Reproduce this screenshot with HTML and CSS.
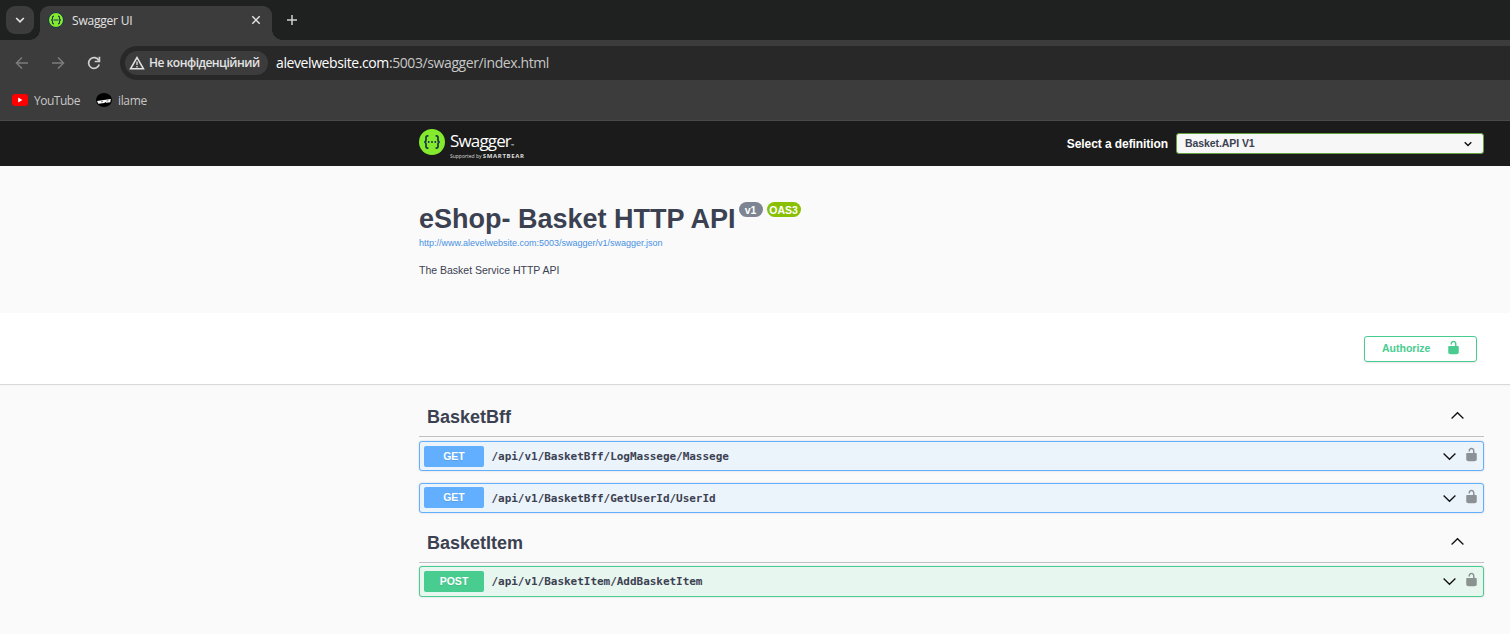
FILE: index.html
```html
<!DOCTYPE html>
<html lang="uk">
<head>
<meta charset="utf-8">
<title>Swagger UI</title>
<link rel="stylesheet" href="styles.css">
</head>
<body>
<svg width="0" height="0" class="defs" aria-hidden="true">
  <symbol id="lock" viewBox="0 0 20 20"><path d="M15.8 8H14V5.6C14 2.703 12.665 1 10 1 7.334 1 6 2.703 6 5.6V6h2v-.801C8 3.754 8.797 3 10 3c1.203 0 2 .754 2 2.199V8H4c-.553 0-1 .646-1 1.199V17c0 .549.428 1.139.951 1.307l1.197.387C5.672 18.861 6.55 19 7.1 19h5.8c.549 0 1.428-.139 1.951-.307l1.196-.387c.524-.167.953-.757.953-1.306V9.199C17 8.646 16.352 8 15.8 8z"/></symbol>
  <symbol id="down" viewBox="0 0 16 16"><path d="M1.7 4.8 8 11l6.3-6.2" fill="none" stroke="#111" stroke-width="1.4"/></symbol>
  <symbol id="up" viewBox="0 0 16 16"><path d="M1.7 11.2 8 5l6.3 6.2" fill="none" stroke="#111" stroke-width="1.4"/></symbol>
  <symbol id="braces" viewBox="0 0 26 26"><circle cx="13" cy="13" r="13" fill="#85ea2d"/><path d="M9.4 6.8H8.6Q7 6.8 7 8.700v2Q7 12.800 5.300 13 7 13.200 7 15.300v2q0 1.900 1.600 1.900h.8M16.600 6.800h.8q1.600 0 1.600 1.900v2q0 2.100 1.700 2.300-1.700.2-1.700 2.300v2q0 1.900-1.600 1.900h-.8" fill="none" stroke="#173647" stroke-width="1.7"/><circle cx="9.7" cy="13" r="1" fill="#173647"/><circle cx="13" cy="13" r="1" fill="#173647"/><circle cx="16.3" cy="13" r="1" fill="#173647"/></symbol>
</svg>

<div class="browser">
  <div class="tabs">
    <div class="tab-search"><svg width="10" height="10" viewBox="0 0 10 10"><path d="M1.2 3 5 6.8 8.8 3" fill="none" stroke="#e3e3e3" stroke-width="1.7"/></svg></div>
    <div class="tab">
      <svg class="favicon" width="16" height="16" viewBox="0 0 16 16"><circle cx="8" cy="8" r="7.5" fill="#85ea2d" stroke="#173647"/><path d="M6 4.1q-1.7 0-1.5 1.7Q4.7 8 3 8q1.7 0 1.5 2.2-.2 1.7 1.5 1.7M10 4.1q1.7 0 1.5 1.7Q11.3 8 13 8q-1.7 0-1.5 2.2.2 1.7-1.5 1.7M5.5 8h5" fill="none" stroke="#173647" stroke-width="1.1"/></svg>
      <span class="tab-title">Swagger UI</span>
      <svg class="close" width="10" height="10" viewBox="0 0 10 10"><path d="m1.3 1.3 7.4 7.4m0-7.4L1.3 8.7" stroke="#e3e3e3" stroke-width="1.5"/></svg>
    </div>
    <svg class="new-tab" width="12" height="12" viewBox="0 0 12 12"><path d="M6 1v10M1 6h10" stroke="#d0d0d0" stroke-width="1.5"/></svg>
  </div>
  <div class="toolbar">
    <svg width="14" height="14" viewBox="0 0 14 14"><path d="M13 7H1.5M7 1.5 1.5 7 7 12.5" fill="none" stroke="#7c7c7c" stroke-width="1.5"/></svg>
    <svg width="14" height="14" viewBox="0 0 14 14"><path d="M1 7h11.5M7 1.5 12.5 7 7 12.5" fill="none" stroke="#7c7c7c" stroke-width="1.5"/></svg>
    <svg width="14" height="14" viewBox="0 0 14 14"><path d="M11.8 4.5A5.4 5.4 0 1 0 12.2 8.5" fill="none" stroke="#d0d0d0" stroke-width="1.7"/><path d="M12.4.8v4.7H7.7" fill="none" stroke="#d0d0d0" stroke-width="1.7"/></svg>
    <div class="address">
      <div class="security"><svg width="16" height="14" viewBox="0 0 16 14"><path d="M8 1.6 14.5 12.8h-13z" fill="none" stroke="#e3e3e3" stroke-width="1.5"/><path d="M8 5.5v3.4M8 10v1.5" stroke="#e3e3e3" stroke-width="1.3"/></svg><span class="security-text">Не конфіденційний</span></div>
      <span class="url"><span class="host">alevelwebsite.com</span>:5003/swagger/index.html</span>
    </div>
  </div>
  <div class="bookmarks">
    <svg width="16" height="12" viewBox="0 0 16 12"><rect width="16" height="12" rx="3" fill="#f00"/><path d="m6.2 3.5 4.2 2.5-4.2 2.5z" fill="#fff"/></svg>
    <span class="youtube">YouTube</span>
    <svg width="16" height="14" viewBox="0 0 16 14"><ellipse cx="8" cy="7" rx="8" ry="7" fill="#000"/><path d="M1 7.9 14.8 5.9 14.3 9.2l-4 .5-1-.7-1 1-6 .8z" fill="#fff"/><path d="m5 8.800 2-.3m3.500-.5 2-.3" stroke="#555" stroke-width=".8"/></svg>
    <span class="ilame">ilame</span>
  </div>
</div>

<header class="topbar">
  <div class="wrap topbar-row">
    <div class="logo">
      <svg width="26" height="26"><use href="#braces"/></svg>
      <div class="logo-words"><div class="wordmark">Swagger<span class="tm">™</span></div><div class="support">Supported by <b>SMARTBEAR</b></div></div>
    </div>
    <div class="definition"><span class="definition-label">Select a definition</span>
      <div class="select"><span class="select-value">Basket.API V1</span><svg width="8" height="8" viewBox="0 0 8 8"><path d="m.7 2.2 3.3 3.3 3.3-3.3" fill="none" stroke="#111" stroke-width="1.4"/></svg></div>
    </div>
  </div>
</header>

<section class="info"><div class="wrap">
  <div class="title-row"><h1>eShop- Basket HTTP API</h1><span class="badge version">v1</span><span class="badge oas">OAS3</span></div>
  <a class="spec-link">http://www.alevelwebsite.com:5003/swagger/v1/swagger.json</a>
  <p class="description">The Basket Service HTTP API</p>
</div></section>

<section class="scheme"><div class="wrap scheme-row">
  <div class="authorize"><span>Authorize</span><svg width="15" height="15"><use href="#lock"/></svg></div>
</div></section>

<main class="wrap">
  <section class="group">
    <h2><span>BasketBff</span><svg width="15" height="15"><use href="#up"/></svg></h2>
    <div class="op get"><span class="method">GET</span><span class="path">/api/v1/BasketBff/LogMassege/Massege</span><svg class="arrow" width="15" height="15"><use href="#down"/></svg><svg class="lock" width="15" height="15"><use href="#lock"/></svg></div>
    <div class="op get"><span class="method">GET</span><span class="path">/api/v1/BasketBff/GetUserId/UserId</span><svg class="arrow" width="15" height="15"><use href="#down"/></svg><svg class="lock" width="15" height="15"><use href="#lock"/></svg></div>
  </section>
  <section class="group">
    <h2><span>BasketItem</span><svg width="15" height="15"><use href="#up"/></svg></h2>
    <div class="op post"><span class="method">POST</span><span class="path">/api/v1/BasketItem/AddBasketItem</span><svg class="arrow" width="15" height="15"><use href="#down"/></svg><svg class="lock" width="15" height="15"><use href="#lock"/></svg></div>
  </section>
</main>
</body>
</html>
```
FILE: styles.css
```css
* { box-sizing: border-box; }
body { margin: 0; height: 634px; overflow: hidden; background: #fafafa; color: #3b4151; font-family: "Liberation Sans", Arial, sans-serif; }
svg { display: block; flex: none; }
.defs { position: absolute; }
.wrap { width: 1065px; margin-left: 419px; }

.browser { height: 121px; background: #3c3c3c; border-bottom: 1px solid #4a4a4a; font-family: "Open Sans", "Noto Sans", sans-serif; color: #c7c7c7; }
.tabs { height: 40px; background: #1f2120; display: flex; padding: 6px 0 0 6px; }
.tab-search { width: 28px; height: 28px; border-radius: 9px; background: #3c3c3c; display: grid; place-items: center; margin-right: 6px; }
.tab { position: relative; width: 232px; height: 34px; border-radius: 9px 9px 0 0; background: #3c3c3c; display: flex; align-items: center; padding: 0 11px 6px 8px; color: #e3e3e3; font-size: 12px; }
.tab::before, .tab::after { content: ""; position: absolute; bottom: 0; width: 10px; height: 10px; }
.tab::before { left: -10px; background: radial-gradient(circle at 0 0, transparent 9.5px, #3c3c3c 10px); }
.tab::after { right: -10px; background: radial-gradient(circle at 100% 0, transparent 9.5px, #3c3c3c 10px); }
.tab-title { margin-left: 8px; letter-spacing: -.2px; }
.close { margin-left: auto; }
.new-tab { margin: 8px 0 0 14px; }
.toolbar { height: 45px; display: flex; align-items: center; padding-left: 15px; gap: 22px; }
.address { height: 34px; flex: 1; background: #282828; border-radius: 17px 0 0 17px; display: flex; align-items: center; padding-left: 5px; margin-left: -3px; }
.security { width: 143px; height: 24px; border-radius: 12px; background: #3c3c3c; display: flex; align-items: center; padding-left: 4px; gap: 4px; color: #e3e3e3; font-size: 12px; font-weight: 600; white-space: nowrap; }
.security-text { letter-spacing: -.5px; }
.url { margin-left: 8px; font-size: 14px; letter-spacing: -.4px; }
.host { color: #fff; }
.bookmarks { height: 30px; display: flex; align-items: center; padding-left: 12px; font-size: 12px; }
.youtube { width: 46px; margin: 0 16px 0 6px; letter-spacing: -.48px; }
.ilame { margin-left: 6px; letter-spacing: -.35px; }

.topbar { height: 45px; background: #1b1b1b; }
.topbar-row { height: 45px; display: flex; justify-content: space-between; color: #fff; }
.logo { display: flex; padding-top: 8px; gap: 5px; }
.logo-words { font-family: "Open Sans", sans-serif; white-space: nowrap; }
.wordmark { font-size: 17px; line-height: 24px; height: 23px; letter-spacing: -.85px; }
.tm { font-size: 4px; letter-spacing: 0; }
.support { font-size: 5px; line-height: 8px; color: #ddd; }
.support b { font-size: 6px; letter-spacing: .65px; }
.definition { display: flex; align-items: center; gap: 8px; font-weight: 700; font-size: 12px; }
.definition-label { letter-spacing: -.08px; }
.select { width: 308px; height: 21px; border: 1px solid #62a03f; border-radius: 3px; background: #f7f7f7; color: #3b4151; font-size: 10.5px; display: flex; align-items: center; justify-content: space-between; padding: 0 11px 0 8px; }
.select-value { letter-spacing: -.08px; padding-bottom: 2px; }

.info { height: 147px; padding-top: 37px; }
.title-row { display: flex; align-items: flex-start; height: 34px; }
h1 { margin: 0; font-size: 27px; line-height: 33px; white-space: nowrap; }
.badge { height: 15px; border-radius: 8px; color: #fff; font-weight: 700; font-size: 10.5px; line-height: 16px; text-align: center; margin-top: -1px; }
.version { width: 24px; background: #7d8492; margin-left: 3px; }
.oas { width: 34px; background: #89bf04; margin-left: 4px; }
.spec-link { display: block; font-size: 9px; line-height: 13px; color: #4990e2; }
.description { margin: 13px 0 0; font-size: 10.5px; line-height: 14px; }

.scheme { height: 71px; background: #fff; box-shadow: 0 1px 1px rgba(0,0,0,.13); padding-top: 23px; }
.scheme-row { display: flex; justify-content: flex-end; padding-right: 7px; }
.authorize { width: 113px; height: 26px; border: 1px solid #49cc90; border-radius: 3px; color: #49cc90; fill: #49cc90; font-size: 10.5px; font-weight: 700; display: flex; align-items: center; justify-content: space-between; padding: 0 15px 2px 17px; box-shadow: 0 1px 2px rgba(0,0,0,.1); }
.authorize svg { margin-bottom: 1px; }

main { padding-top: 13px; }
.group { height: 126px; }
h2 { margin: 0 0 4px; height: 40px; border-bottom: 1px solid #bfc0c4; font-size: 18px; display: flex; align-items: center; justify-content: space-between; padding: 0 19px 0 8px; }
h2 span { padding-top: 1px; }
h2 svg { margin-bottom: 2px; }
.op { height: 30px; border: 1px solid #61affe; border-radius: 3px; background: #ebf3fb; display: flex; align-items: center; margin-bottom: 12px; padding: 0 4px; box-shadow: 0 0 2px rgba(0,0,0,.19); }
.op + .op .method { margin-bottom: 2px; }
.op.post { border-color: #49cc90; background: #e8f6f0; height: 31px; margin-top: -5px; padding-bottom: 1px; }
.group:last-child h2 { margin-bottom: 8px; }
.method { width: 60px; height: 21px; border-radius: 2px; background: #61affe; color: #fff; font-size: 10.5px; line-height: 21px; font-weight: 700; text-align: center; text-shadow: 0 1px 0 rgba(0,0,0,.1); }
.post .method { background: #49cc90; }
.path { margin-left: 7.5px; font: 700 11px "DejaVu Sans Mono", monospace; letter-spacing: -.03px; }
.arrow { margin-left: auto; }
.lock { margin: 0 0 3px 7px; fill: #000; opacity: .4; }
```
